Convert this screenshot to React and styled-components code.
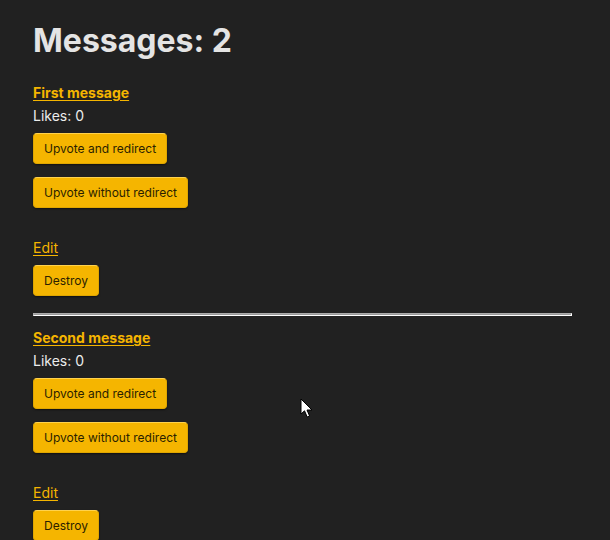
import React from "react";
import styled, { createGlobalStyle } from "styled-components";

const GlobalStyle = createGlobalStyle`
  html, body {
    margin: 0;
    background: #212121;
  }
  body {
    font-family: Inter, "Noto Sans", "Liberation Sans", sans-serif;
    color: #e6e6e6;
  }
`;

const messages = [
  { id: 1, title: "First message", likes: 0 },
  { id: 2, title: "Second message", likes: 0 },
];

export default function App() {
  return (
    <Page>
      <GlobalStyle />
      <Title>Messages: {messages.length}</Title>
      {messages.map((m, index) => (
        <React.Fragment key={m.id}>
          {index > 0 && <Divider />}
          <Message>
            <TitleLink href="#">{m.title}</TitleLink>
            <Likes>Likes: {m.likes}</Likes>
            <ButtonForm>
              <Button>Upvote and redirect</Button>
            </ButtonForm>
            <ButtonForm $gap={13}>
              <Button>Upvote without redirect</Button>
            </ButtonForm>
            <EditLink href="#">Edit</EditLink>
            <ButtonForm $gap={6}>
              <Button>Destroy</Button>
            </ButtonForm>
          </Message>
        </React.Fragment>
      ))}
      <Cursor width="14" height="22" viewBox="0 0 14 22">
        <path
          d="M1 1 L1 16 L4.5 12.8 L7.2 19 L9.6 18 L7 12 L12 12 Z"
          fill="#ffffff"
          stroke="#000000"
          strokeWidth="1"
          strokeLinejoin="round"
        />
      </Cursor>
    </Page>
  );
}

const Page = styled.div`
  position: relative;
  padding: 21px 38px 0 33px;
  box-sizing: border-box;
  overflow: hidden;
  height: 540px;
`;

const Title = styled.h1`
  margin: 0 0 21px;
  font-size: 32px;
  line-height: 40px;
  font-weight: 700;
  color: #e4e4e4;
`;

const Message = styled.div`
  display: flex;
  flex-direction: column;
  align-items: flex-start;
`;

const TitleLink = styled.a`
  font-size: 14px;
  line-height: 22px;
  font-weight: 700;
  color: #f5b500;
  text-decoration: underline;
  text-underline-offset: 2px;
`;

const Likes = styled.div`
  margin-top: 1px;
  font-size: 14px;
  line-height: 22px;
  color: #ececec;
`;

const ButtonForm = styled.form`
  margin: ${(p) => p.$gap ?? 6}px 0 0;
`;

const Button = styled.button`
  height: 31px;
  padding: 0 10px;
  font-family: Inter, "Noto Sans", "Liberation Sans", sans-serif;
  font-size: 12px;
  color: #2b1f00;
  background: #f5b500;
  border: 1px solid #e0a600;
  border-top-color: #ffd24d;
  border-radius: 4px;
  box-shadow: 0 1px 2px rgba(0, 0, 0, 0.5);
  cursor: pointer;
`;

const EditLink = styled.a`
  margin-top: 29px;
  font-size: 14px;
  line-height: 22px;
  color: #f5b500;
  text-decoration: underline;
  text-underline-offset: 2px;
`;

const Divider = styled.hr`
  margin: 17px 0 11px;
  height: 1px;
  border: 1px inset #ffffff;
  background: #9a9a9a;
`;

const Cursor = styled.svg`
  position: absolute;
  left: 300px;
  top: 398px;
`;
